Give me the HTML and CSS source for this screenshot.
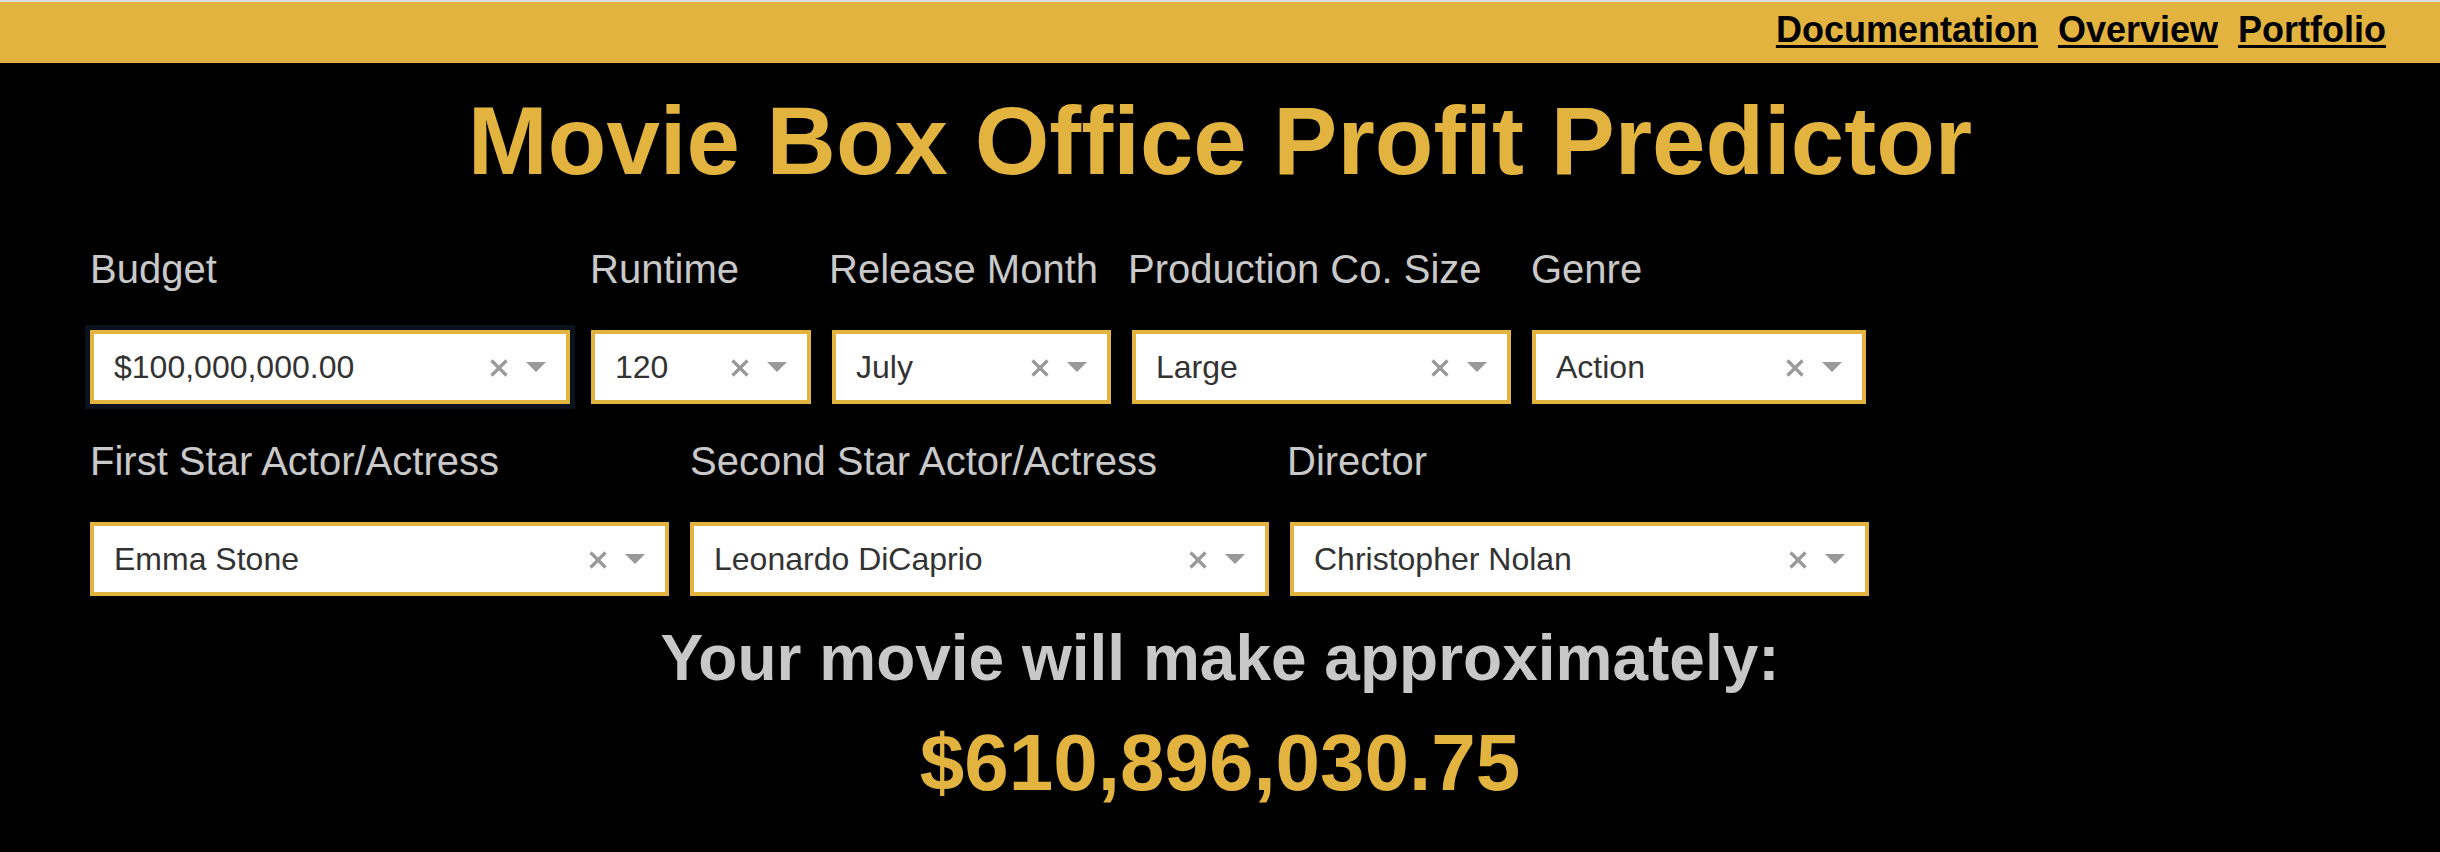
FILE: index.html
```html
<!DOCTYPE html>
<html lang="en">
<head>
<meta charset="utf-8">
<title>Movie Box Office Profit Predictor</title>
<link rel="stylesheet" href="styles.css">
</head>
<body>
<header class="topbar">
  <nav class="nav">
    <a href="#" class="nav-link">Documentation</a>
    <a href="#" class="nav-link">Overview</a>
    <a href="#" class="nav-link">Portfolio</a>
  </nav>
</header>
<main class="main">
  <h1 class="title">Movie Box Office Profit Predictor</h1>

  <div class="row row-first">
    <div class="field w-budget">
      <label class="label">Budget</label>
      <div class="select select-focused">
        <span class="select-value">$100,000,000.00</span>
        <svg class="select-clear" width="18" height="18" viewBox="0 0 18 18"><path d="M1.5 1.5 L16.5 16.5 M16.5 1.5 L1.5 16.5" stroke="#999" stroke-width="3.2" fill="none"/></svg>
        <span class="select-arrow"></span>
      </div>
    </div>
    <div class="field w-runtime">
      <label class="label label-shift1">Runtime</label>
      <div class="select">
        <span class="select-value">120</span>
        <svg class="select-clear" width="18" height="18" viewBox="0 0 18 18"><path d="M1.5 1.5 L16.5 16.5 M16.5 1.5 L1.5 16.5" stroke="#999" stroke-width="3.2" fill="none"/></svg>
        <span class="select-arrow"></span>
      </div>
    </div>
    <div class="field w-month">
      <label class="label label-shift3">Release Month</label>
      <div class="select">
        <span class="select-value">July</span>
        <svg class="select-clear" width="18" height="18" viewBox="0 0 18 18"><path d="M1.5 1.5 L16.5 16.5 M16.5 1.5 L1.5 16.5" stroke="#999" stroke-width="3.2" fill="none"/></svg>
        <span class="select-arrow"></span>
      </div>
    </div>
    <div class="field w-prod">
      <label class="label label-shift4">Production Co. Size</label>
      <div class="select">
        <span class="select-value">Large</span>
        <svg class="select-clear" width="18" height="18" viewBox="0 0 18 18"><path d="M1.5 1.5 L16.5 16.5 M16.5 1.5 L1.5 16.5" stroke="#999" stroke-width="3.2" fill="none"/></svg>
        <span class="select-arrow"></span>
      </div>
    </div>
    <div class="field w-genre">
      <label class="label label-shift1">Genre</label>
      <div class="select">
        <span class="select-value">Action</span>
        <svg class="select-clear" width="18" height="18" viewBox="0 0 18 18"><path d="M1.5 1.5 L16.5 16.5 M16.5 1.5 L1.5 16.5" stroke="#999" stroke-width="3.2" fill="none"/></svg>
        <span class="select-arrow"></span>
      </div>
    </div>
  </div>

  <div class="row row-second">
    <div class="field w-person">
      <label class="label">First Star Actor/Actress</label>
      <div class="select">
        <span class="select-value">Emma Stone</span>
        <svg class="select-clear" width="18" height="18" viewBox="0 0 18 18"><path d="M1.5 1.5 L16.5 16.5 M16.5 1.5 L1.5 16.5" stroke="#999" stroke-width="3.2" fill="none"/></svg>
        <span class="select-arrow"></span>
      </div>
    </div>
    <div class="field w-person">
      <label class="label">Second Star Actor/Actress</label>
      <div class="select">
        <span class="select-value">Leonardo DiCaprio</span>
        <svg class="select-clear" width="18" height="18" viewBox="0 0 18 18"><path d="M1.5 1.5 L16.5 16.5 M16.5 1.5 L1.5 16.5" stroke="#999" stroke-width="3.2" fill="none"/></svg>
        <span class="select-arrow"></span>
      </div>
    </div>
    <div class="field w-person">
      <label class="label label-shift3">Director</label>
      <div class="select">
        <span class="select-value">Christopher Nolan</span>
        <svg class="select-clear" width="18" height="18" viewBox="0 0 18 18"><path d="M1.5 1.5 L16.5 16.5 M16.5 1.5 L1.5 16.5" stroke="#999" stroke-width="3.2" fill="none"/></svg>
        <span class="select-arrow"></span>
      </div>
    </div>
  </div>

  <h2 class="result-label">Your movie will make approximately:</h2>
  <div class="result-value">$610,896,030.75</div>
</main>
</body>
</html>
```

FILE: styles.css
```css
html, body {
  margin: 0;
  padding: 0;
  background: #000;
}

body {
  font-family: "Liberation Sans", Arial, Helvetica, sans-serif;
  width: 2440px;
  height: 852px;
  overflow: hidden;
}

.topbar {
  box-sizing: border-box;
  height: 63px;
  border-top: 2px solid #dcdcdc;
  background: #e2b43f;
}

.nav {
  display: flex;
  justify-content: flex-end;
  gap: 20px;
  padding: 8px 54px 0 0;
}

.nav-link {
  color: #000;
  font-weight: bold;
  font-size: 36px;
  line-height: 40px;
  text-decoration: underline;
  text-decoration-thickness: 3px;
  text-underline-offset: 3px;
}

.main {
  padding: 0 0 0 90px;
}

.title {
  margin: 23px 0 0 -90px;
  font-size: 96px;
  line-height: 110px;
  font-weight: bold;
  color: #e2b43f;
  text-align: center;
}

.row {
  display: flex;
  gap: 21px;
}

.row-first {
  margin-top: 50px;
}

.row-second {
  margin-top: 34px;
}

.field {
  display: flex;
  flex-direction: column;
  gap: 38px;
}

.w-budget { width: 480px; }
.w-runtime { width: 220px; }
.w-month { width: 279px; }
.w-prod { width: 379px; }
.w-genre { width: 334px; }
.w-person { width: 579px; }

.label {
  display: block;
  font-size: 40px;
  line-height: 46px;
  color: #c9c9c9;
  white-space: nowrap;
}

.label-shift1 { margin-left: -1px; }
.label-shift3 { margin-left: -3px; }
.label-shift4 { margin-left: -4px; }

.select {
  box-sizing: border-box;
  height: 74px;
  border: 4px solid #e2b43f;
  background: #fff;
  display: flex;
  align-items: center;
  padding: 0 20px 0 20px;
}

.select-focused {
  box-shadow: 0 0 0 5px #0b111d;
}

.select-value {
  flex: 1;
  font-size: 32px;
  color: #333;
  white-space: nowrap;
  overflow: hidden;
}

.select-clear {
  flex: none;
  margin-top: 2px;
}

.select-arrow {
  flex: none;
  width: 0;
  height: 0;
  margin-left: 18px;
  border-top: 10px solid #999;
  border-left: 10px solid transparent;
  border-right: 10px solid transparent;
}

.result-label {
  margin: 25px 0 0 -90px;
  font-size: 64px;
  line-height: 74px;
  font-weight: bold;
  color: #c8c8c8;
  text-align: center;
}

.result-value {
  margin: 22px 0 0 -90px;
  font-size: 80px;
  line-height: 92px;
  font-weight: bold;
  color: #e2b43f;
  text-align: center;
}
```
